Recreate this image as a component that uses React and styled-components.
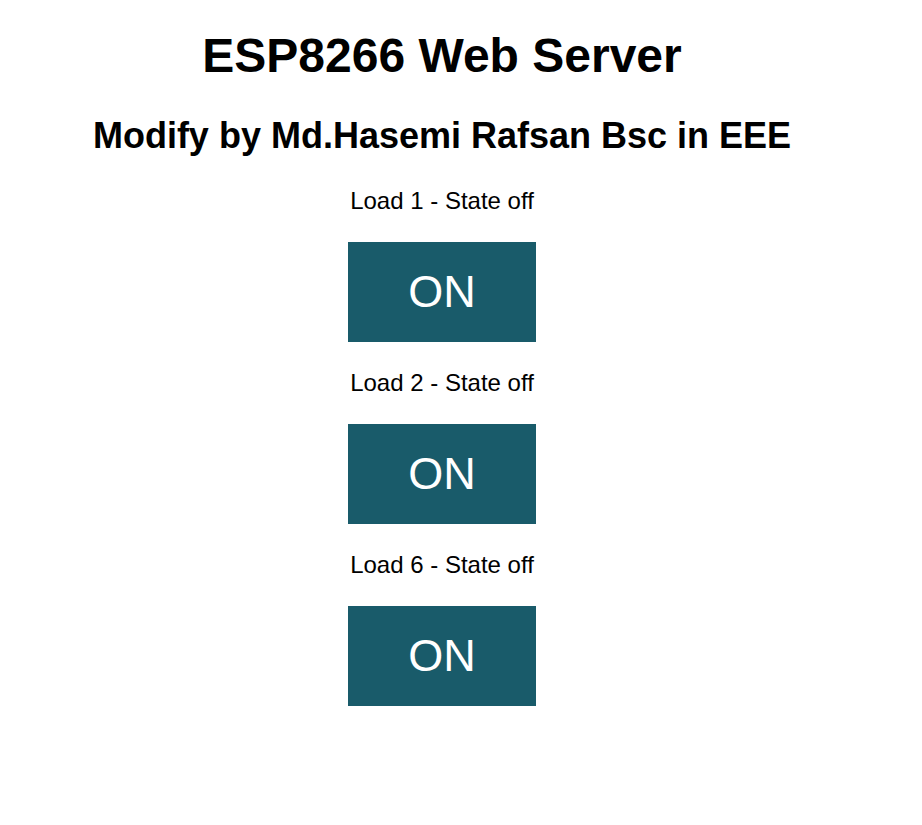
import React from 'react'
import styled, { createGlobalStyle } from 'styled-components';

const GlobalStyle = createGlobalStyle`
    html, body {
        margin: 0;
        padding: 0;
        background: #fff;
    }
    body {
        margin: 12px 50px 12px 12px;
        font-family: "Liberation Sans", Arial, Helvetica, sans-serif;
    }
`;

const loads = [1, 2, 6];

export default function App() {
    return (
        <>
            <GlobalStyle />
            <Page>
                <Title>ESP8266 Web Server</Title>
                <Subtitle>Modify by Md.Hasemi Rafsan Bsc in EEE</Subtitle>
                {loads.map(n => (
                    <LoadBlock key={n}>
                        <StateText>Load {n} - State off</StateText>
                        <ButtonRow>
                            <ToggleButton>ON</ToggleButton>
                        </ButtonRow>
                    </LoadBlock>
                ))}
            </Page>
        </>
    );
}

const Page = styled.div`
    text-align: center;
    color: #000;
`;

const Title = styled.h1`
    font-size: 48px;
    font-weight: bold;
    margin: 16px 0 32px;
`;

const Subtitle = styled.h2`
    font-size: 36px;
    font-weight: bold;
    margin: 30px 0;
`;

const LoadBlock = styled.div``;

const StateText = styled.p`
    font-size: 24px;
    margin: 24px 0;
`;

const ButtonRow = styled.p`
    font-size: 24px;
    margin: 27px 0;
`;

const ToggleButton = styled.button`
    background-color: #195B6A;
    border: none;
    color: #fff;
    padding: 24px 60px;
    font-family: "Liberation Sans", Arial, Helvetica, sans-serif;
    font-size: 45px;
    margin: 0 3px;
    cursor: pointer;
`;
